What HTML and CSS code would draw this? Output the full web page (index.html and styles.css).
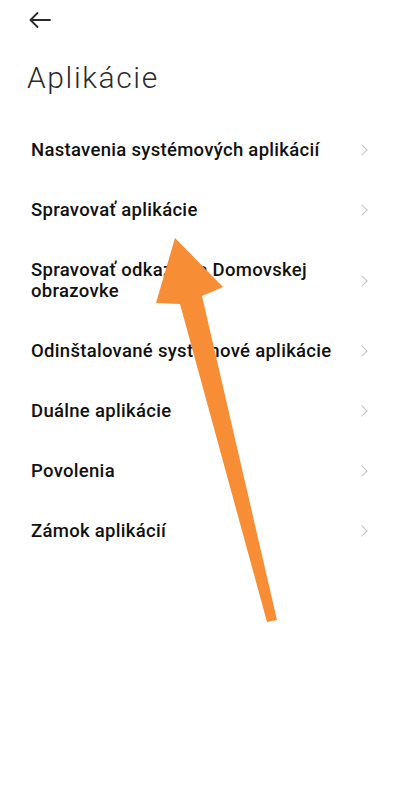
FILE: index.html
```html
<!DOCTYPE html>
<html lang="sk">
<head>
<meta charset="utf-8">
<link rel="stylesheet" href="styles.css">
</head>
<body>
<div class="screen">
  <header class="top">
    <svg class="back" width="24" height="18" viewBox="0 0 24 18"><path d="M22 9H3M9.5 2L2.5 9l7 7" fill="none" stroke="#2a2a2a" stroke-width="1.8" stroke-linecap="round" stroke-linejoin="round"/></svg>
  </header>
  <h1 class="title">Aplikácie</h1>
  <ul class="list">
    <li class="row"><span class="label">Nastavenia systémových aplikácií</span><span class="chev"></span></li>
    <li class="row"><span class="label">Spravovať aplikácie</span><span class="chev"></span></li>
    <li class="row"><span class="label">Spravovať odkazy na Domovskej obrazovke</span><span class="chev"></span></li>
    <li class="row"><span class="label">Odinštalované systémové aplikácie</span><span class="chev"></span></li>
    <li class="row"><span class="label">Duálne aplikácie</span><span class="chev"></span></li>
    <li class="row"><span class="label">Povolenia</span><span class="chev"></span></li>
    <li class="row"><span class="label">Zámok aplikácií</span><span class="chev"></span></li>
  </ul>
  <svg class="pointer" width="400" height="799" viewBox="0 0 400 799"><polygon points="175,238 223,287 202,296 277,620 267,622 180,304 156,303" fill="#f78d34"/></svg>
</div>
</body>
</html>
```
FILE: styles.css
```css
html, body { margin: 0; padding: 0; background: #fff; }
.screen { position: relative; width: 400px; height: 799px; overflow: hidden; font-family: Roboto, "Noto Sans", sans-serif; }
.top { height: 40px; padding-left: 28px; display: flex; align-items: center; }
.back { display: block; }
.title { margin: 18px 0 0 27px; font-size: 30px; font-weight: 300; color: #2b2b2b; line-height: 40px; letter-spacing: 1.6px; }
.list { list-style: none; margin: 0; padding: 0; margin-top: 22px; }
.row { display: flex; align-items: center; justify-content: space-between; padding: 19.5px 30px 19.5px 31px; }
.label { font-size: 18.5px; font-weight: 500; color: #111; line-height: 21px; max-width: 318px; letter-spacing: 0.3px; }
.chev { width: 7px; height: 7px; border-right: 1.4px solid #c4c4c4; border-top: 1.4px solid #c4c4c4; transform: rotate(45deg); margin-right: 4px; flex: none; }
.pointer { position: absolute; left: 0; top: 0; pointer-events: none; }
```
